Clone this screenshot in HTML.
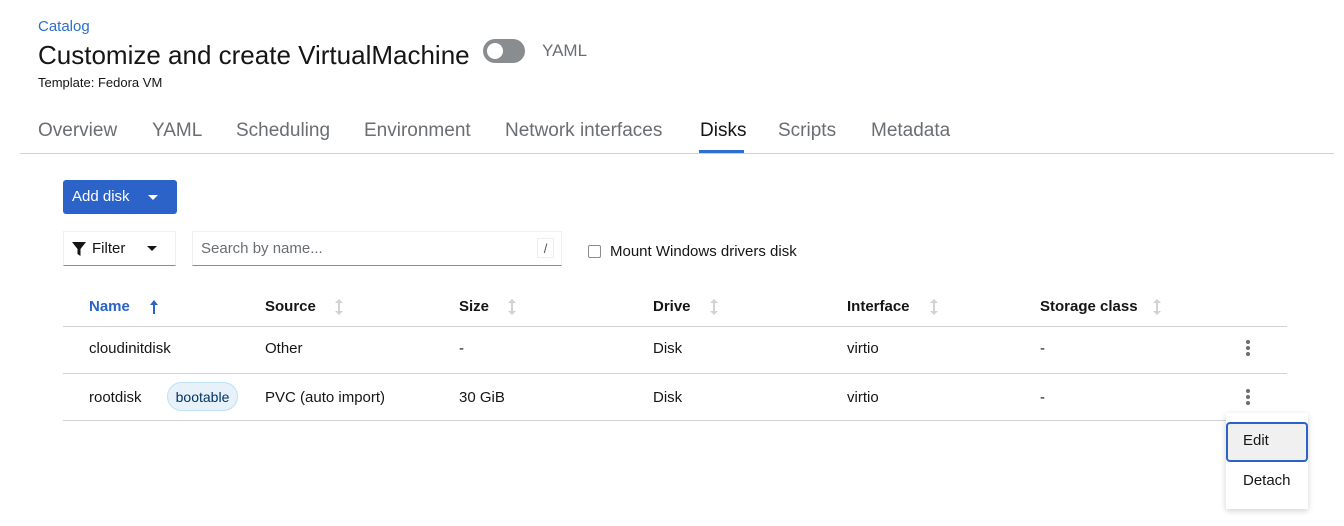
<!DOCTYPE html>
<html><head><meta charset="utf-8"><style>
*{margin:0;padding:0;box-sizing:border-box}
body{width:1344px;height:526px;background:#fff;font-family:"Liberation Sans",sans-serif;color:#151515;position:relative;overflow:hidden}
.a{position:absolute;white-space:nowrap}
.tab{position:absolute;top:120px;font-size:19px;color:#6a6e73}
.th{position:absolute;top:298px;font-size:15px;font-weight:bold}
.td{position:absolute;font-size:15px}
.sort{position:absolute;top:299px;width:10px;height:16px}
.kb{position:absolute;left:1246px;width:4px}
.kb i{display:block;width:4px;height:4px;border-radius:2px;background:#6a6e73;margin-bottom:2px}
</style></head><body>
<div class="a" style="left:38px;top:18px;font-size:15px;color:#2b6fd0">Catalog</div>
<div class="a" style="left:38px;top:40px;font-size:26px;color:#151515">Customize and create VirtualMachine</div>
<div class="a" style="left:483px;top:39px;width:42px;height:24px;border-radius:12px;background:#8a8d90"><div style="position:absolute;left:4px;top:4px;width:16px;height:16px;border-radius:8px;background:#fff"></div></div>
<div class="a" style="left:542px;top:41px;font-size:17px;color:#6a6e73">YAML</div>
<div class="a" style="left:38px;top:75px;font-size:13px">Template: Fedora VM</div>
<div class="tab" style="left:38px">Overview</div>
<div class="tab" style="left:152px">YAML</div>
<div class="tab" style="left:236px">Scheduling</div>
<div class="tab" style="left:364px">Environment</div>
<div class="tab" style="left:505px">Network interfaces</div>
<div class="tab" style="left:700px;color:#151515">Disks</div>
<div class="tab" style="left:778px">Scripts</div>
<div class="tab" style="left:871px">Metadata</div>
<div class="a" style="left:699px;top:150px;width:45px;height:3px;background:#2b6fd0"></div>
<div class="a" style="left:20px;top:153px;width:1314px;height:1px;background:#d2d2d2"></div>

<div class="a" style="left:63px;top:180px;width:114px;height:34px;background:#2b63c9;border-radius:3px;color:#fff;font-size:15px;padding:8px 0 0 9px">Add disk<span style="position:absolute;left:85px;top:15px;border-left:5px solid transparent;border-right:5px solid transparent;border-top:5px solid #fff"></span></div>

<div class="a" style="left:63px;top:231px;width:113px;height:35px;border:1px solid #f0f0f0;border-bottom:1px solid #8a8d90"></div>
<svg class="a" style="left:72px;top:242px" width="14" height="14" viewBox="0 0 14 14"><path d="M0 0H14L8.5 7V14L5.5 12V7Z" fill="#151515"/></svg>
<div class="a" style="left:92px;top:240px;font-size:15px">Filter</div>
<span class="a" style="left:147px;top:246px;border-left:5px solid transparent;border-right:5px solid transparent;border-top:5px solid #151515"></span>
<div class="a" style="left:192px;top:231px;width:370px;height:35px;border:1px solid #f0f0f0;border-bottom:1px solid #8a8d90"></div>
<div class="a" style="left:201px;top:240px;font-size:15px;color:#6a6e73">Search by name...</div>
<div class="a" style="left:537px;top:238px;width:17px;height:20px;border:1px solid #eee;font-size:13px;color:#555;text-align:center;padding-top:2px">/</div>
<div class="a" style="left:588px;top:245px;width:13px;height:13px;border:1px solid #8a8d90;border-radius:2px"></div>
<div class="a" style="left:610px;top:243px;font-size:15px">Mount Windows drivers disk</div>

<div class="th" style="left:89px;color:#2b63c9">Name</div>
<svg class="sort" style="left:149px" viewBox="0 0 10 16"><path d="M5 1L1 6H4V15H6V6H9Z" fill="#2b63c9"/></svg>
<div class="th" style="left:265px">Source</div>
<div class="th" style="left:459px">Size</div>
<div class="th" style="left:653px">Drive</div>
<div class="th" style="left:847px">Interface</div>
<div class="th" style="left:1040px">Storage class</div>
<svg class="sort" style="left:334px" viewBox="0 0 10 16"><path d="M5 0L1 4H4V12H1L5 16L9 12H6V4H9Z" fill="#d2d2d2"/></svg>
<svg class="sort" style="left:507px" viewBox="0 0 10 16"><path d="M5 0L1 4H4V12H1L5 16L9 12H6V4H9Z" fill="#d2d2d2"/></svg>
<svg class="sort" style="left:709px" viewBox="0 0 10 16"><path d="M5 0L1 4H4V12H1L5 16L9 12H6V4H9Z" fill="#d2d2d2"/></svg>
<svg class="sort" style="left:929px" viewBox="0 0 10 16"><path d="M5 0L1 4H4V12H1L5 16L9 12H6V4H9Z" fill="#d2d2d2"/></svg>
<svg class="sort" style="left:1152px" viewBox="0 0 10 16"><path d="M5 0L1 4H4V12H1L5 16L9 12H6V4H9Z" fill="#d2d2d2"/></svg>
<div class="a" style="left:63px;top:326px;width:1224px;height:1px;background:#d2d2d2"></div>
<div class="td" style="left:89px;top:340px">cloudinitdisk</div>
<div class="td" style="left:265px;top:340px">Other</div>
<div class="td" style="left:459px;top:340px">-</div>
<div class="td" style="left:653px;top:340px">Disk</div>
<div class="td" style="left:847px;top:340px">virtio</div>
<div class="td" style="left:1040px;top:340px">-</div>
<div class="kb" style="top:340px"><i></i><i></i><i></i></div>
<div class="a" style="left:63px;top:373px;width:1224px;height:1px;background:#d2d2d2"></div>
<div class="td" style="left:89px;top:389px">rootdisk</div>
<div class="a" style="left:167px;top:382px;width:71px;height:29px;border:1px solid #bee1f4;background:#e7f1fa;border-radius:15px;font-size:14px;color:#003366;text-align:center;padding-top:6px">bootable</div>
<div class="td" style="left:265px;top:389px">PVC (auto import)</div>
<div class="td" style="left:459px;top:389px">30 GiB</div>
<div class="td" style="left:653px;top:389px">Disk</div>
<div class="td" style="left:847px;top:389px">virtio</div>
<div class="td" style="left:1040px;top:389px">-</div>
<div class="kb" style="top:389px"><i></i><i></i><i></i></div>
<div class="a" style="left:63px;top:420px;width:1224px;height:1px;background:#d2d2d2"></div>

<div class="a" style="left:1226px;top:413px;width:82px;height:96px;background:#fff;box-shadow:0 2px 6px rgba(0,0,0,.18)"></div>
<div class="a" style="left:1226px;top:422px;width:82px;height:40px;background:#f0f0f0;border:2px solid #2b63c9;border-radius:4px"></div>
<div class="a" style="left:1243px;top:432px;font-size:15px">Edit</div>
<div class="a" style="left:1243px;top:472px;font-size:15px">Detach</div>
</body></html>
